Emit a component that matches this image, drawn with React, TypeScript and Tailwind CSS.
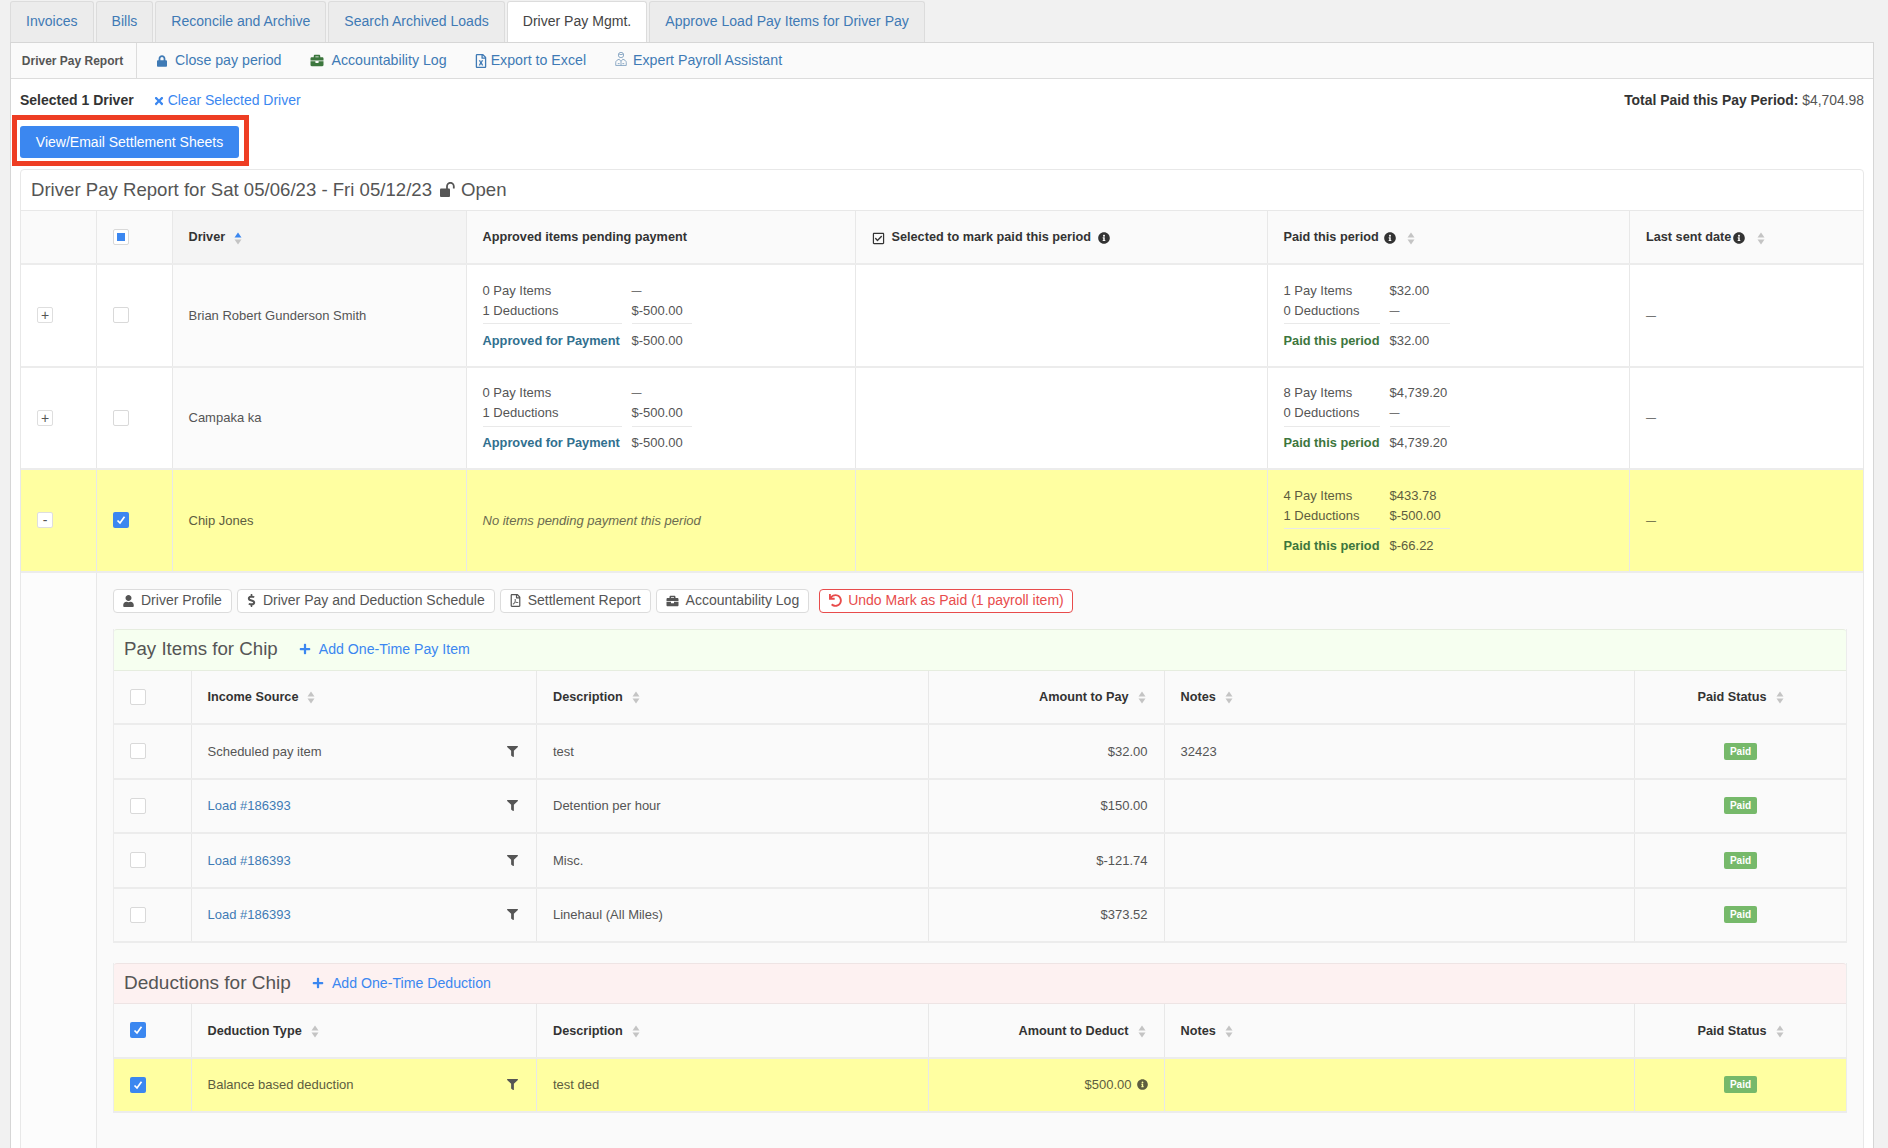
import type { ReactNode } from "react";
import {
  FaLock,
  FaBriefcase,
  FaRegFileExcel,
  FaRegFilePdf,
  FaTimes,
  FaInfoCircle,
  FaRegCheckSquare,
  FaUser,
  FaDollarSign,
  FaUndo,
  FaPlus,
  FaFilter,
} from "react-icons/fa";

const tabs = ["Invoices", "Bills", "Reconcile and Archive", "Search Archived Loads", "Driver Pay Mgmt.", "Approve Load Pay Items for Driver Pay"];

function Sort({ active }: { active?: boolean }) {
  return (
    <svg width="8" height="13" viewBox="0 0 8 13" className="inline-block shrink-0">
      <path d="M4 0.5 L7.5 5.5 L0.5 5.5 Z" fill={active ? "#3b87f0" : "#c4c4c4"} />
      <path d="M4 12.5 L7.5 7.5 L0.5 7.5 Z" fill="#c4c4c4" />
    </svg>
  );
}

function Box({ checked, partial }: { checked?: boolean; partial?: boolean }) {
  if (checked) {
    return (
      <span className="flex h-4 w-4 items-center justify-center rounded-[2px] bg-[#3b87f0]">
        <svg width="10" height="10" viewBox="0 0 10 10">
          <path d="M1.5 5.5 L4 8 L8.5 1.8" fill="none" stroke="#fff" strokeWidth="1.7" />
        </svg>
      </span>
    );
  }
  return (
    <span className="flex h-4 w-4 items-center justify-center rounded-[2px] border border-[#d9d9d9] bg-white">
      {partial && <span className="h-2 w-2 bg-[#3b87f0]" />}
    </span>
  );
}

function Expander({ sign }: { sign: string }) {
  return (
    <span className="flex h-4 w-4 items-center justify-center rounded-[2px] border border-[#dedede] bg-white text-[14px] leading-none text-[#555]">
      {sign}
    </span>
  );
}

function PayrollIcon() {
  return (
    <svg width="12" height="16" viewBox="0 0 13 16" fill="none" stroke="#7a9cbc" strokeWidth="0.9" className="-mt-[3px]">
      <circle cx="6.5" cy="3.7" r="2.9" />
      <path d="M4.2 2.6 C5.5 3.4 7.5 3.4 8.8 2.6" />
      <path d="M0.8 15 V11.6 C0.8 9.8 2.8 8.8 4.6 8.3 L6.5 10.6 L8.4 8.3 C10.2 8.8 12.2 9.8 12.2 11.6 V15 Z" />
      <path d="M6.5 10.6 V15 M3 13 H5 M8 13 H10" />
    </svg>
  );
}

function OpenLock() {
  return (
    <svg width="16" height="15" viewBox="0 0 16 15" className="shrink-0">
      <rect x="0" y="6.5" width="10" height="8.5" rx="1" fill="#555" />
      <path d="M7 7 V4.2 a3.4 3.4 0 0 1 6.8 0 V6.5" fill="none" stroke="#555" strokeWidth="1.8" />
    </svg>
  );
}

function Amount({ value }: { value: string }) {
  return <span className={value === "—" ? "w-[60px] text-[10px]" : "w-[60px]"}>{value}</span>;
}

function Summary({ rows, total, totalClass, labelClass }: { rows: [string, string][]; total: [string, string]; totalClass: string; labelClass: string }) {
  return (
    <div>
      {rows.map(([a, b]) => (
        <div key={a} className="flex h-[20px] items-center gap-[10px]">
          <span className={labelClass}>{a}</span>
          <Amount value={b} />
        </div>
      ))}
      <div className="mt-[3px] flex gap-[10px]">
        <span className={`${labelClass} border-t border-[#e9e9e9]`} />
        <span className="w-[60px] border-t border-[#e9e9e9]" />
      </div>
      <div className="mt-[6px] flex h-[20px] items-center gap-[10px]">
        <span className={`${labelClass} whitespace-nowrap text-[12.8px] font-bold ${totalClass}`}>{total[0]}</span>
        <Amount value={total[1]} />
      </div>
    </div>
  );
}

const drivers = [
  {
    name: "Brian Robert Gunderson Smith",
    pending: [["0 Pay Items", "—"], ["1 Deductions", "$-500.00"]] as [string, string][],
    pendingTotal: "$-500.00",
    paid: [["1 Pay Items", "$32.00"], ["0 Deductions", "—"]] as [string, string][],
    paidTotal: "$32.00",
  },
  {
    name: "Campaka ka",
    pending: [["0 Pay Items", "—"], ["1 Deductions", "$-500.00"]] as [string, string][],
    pendingTotal: "$-500.00",
    paid: [["8 Pay Items", "$4,739.20"], ["0 Deductions", "—"]] as [string, string][],
    paidTotal: "$4,739.20",
  },
  {
    name: "Chip Jones",
    selected: true,
    pending: [] as [string, string][],
    pendingTotal: "",
    paid: [["4 Pay Items", "$433.78"], ["1 Deductions", "$-500.00"]] as [string, string][],
    paidTotal: "$-66.22",
  },
];

const mainCols = "grid grid-cols-[76px_75.5px_294px_389px_412px_362.5px_1fr]";
const subCols = "grid grid-cols-[77.5px_345.5px_391.5px_236px_470.5px_1fr]";
const cell = "flex items-center border-r border-[#e8e8e8] pl-4";

function ActionButton({ icon, children }: { icon: ReactNode; children: ReactNode }) {
  return (
    <button className="flex h-[24px] items-center gap-[7px] rounded-[4px] border border-[#dcdcdc] bg-white px-[9px] text-[14px] text-[#555]">
      {icon}
      {children}
    </button>
  );
}

function SubHeader({ checked, source, amount }: { checked?: boolean; source: string; amount: string }) {
  return (
    <div className={`${subCols} h-[54.5px] border-b-2 border-[#ececec] text-[12.7px] font-bold text-[#333]`}>
      <div className={cell}><Box checked={checked} /></div>
      <div className={`${cell} gap-[9px] pt-[2px]`}>{source}<Sort /></div>
      <div className={`${cell} gap-[9px] pt-[2px]`}>Description<Sort /></div>
      <div className={`${cell} justify-end gap-[9px] pr-[18px] pt-[2px]`}>{amount}<Sort /></div>
      <div className={`${cell} gap-[9px] pt-[2px]`}>Notes<Sort /></div>
      <div className="flex items-center justify-center gap-[9px] pt-[2px]">Paid Status<Sort /></div>
    </div>
  );
}

function SubRow({ source, link, desc, amount, notes, selected, info }: { source: string; link?: boolean; desc: string; amount: string; notes?: string; selected?: boolean; info?: boolean }) {
  return (
    <div className={`${subCols} h-[54.5px] border-b-2 border-[#ececec] ${selected ? "bg-[#ffffa1] text-[#5d5d3f]" : ""}`}>
      <div className={cell}><Box checked={selected} /></div>
      <div className={`${cell} justify-between pr-[18px]`}>
        <span className={link ? "text-[#3f7ab5]" : ""}>{source}</span>
        <FaFilter className="h-[11px] w-[11px] text-[#555]" />
      </div>
      <div className={cell}>{desc}</div>
      <div className={`${cell} justify-end gap-[5px] pr-4`}>
        {amount}
        {info && <FaInfoCircle className="h-[11px] w-[11px]" />}
      </div>
      <div className={cell}>{notes}</div>
      <div className="flex items-center justify-center">
        <span className="flex h-[17px] w-[33px] items-center justify-center rounded-[2px] bg-[#76b96a] text-[10px] font-bold text-white">Paid</span>
      </div>
    </div>
  );
}

export default function App() {
  return (
    <div className="h-[1148px] overflow-hidden bg-[#f1f1f1] pl-[10px] pr-[14px] pt-px font-['Liberation_Sans',Arial,sans-serif] text-[13px] text-[#555]">
      {/* top tabs */}
      <div className="flex h-[41px] gap-[2px]">
        {tabs.map((t) => {
          const active = t === "Driver Pay Mgmt.";
          return (
            <div
              key={t}
              className={`flex items-center rounded-t-[3px] border border-b-0 border-[#dcdcdc] px-[15px] text-[14.05px] ${active ? "bg-white text-[#444]" : "bg-[#ececec] text-[#3f7ab5]"}`}
            >
              {t}
            </div>
          );
        })}
      </div>

      <div className="h-full border border-[#d6d6d6] bg-white">
        {/* sub nav */}
        <div className="flex h-[36px] items-center border-b border-[#dcdcdc] bg-[#fafafa] text-[14.2px] text-[#3f7ab5]">
          <div className="flex h-full w-[126px] items-center justify-center border-r border-[#dcdcdc] pr-[2px] text-[12px] font-bold text-[#555]">Driver Pay Report</div>
          <a className="ml-[20px] flex items-center gap-[8px] pt-px"><FaLock className="h-[12px] w-[10px]" />Close pay period</a>
          <a className="ml-[29px] flex items-center gap-[7px] pt-px"><FaBriefcase className="h-[13px] w-[14px] text-[#3c763d]" />Accountability Log</a>
          <a className="ml-[28px] flex items-center gap-[4px] pt-px"><FaRegFileExcel className="h-[14px] w-[12px]" />Export to Excel</a>
          <a className="ml-[29px] flex items-center gap-[6px] pt-px"><PayrollIcon />Expert Payroll Assistant</a>
        </div>

        <div className="px-[9px]">
          {/* selection summary */}
          <div className="flex h-[36px] items-center justify-between pt-[7px]">
            <div className="flex items-center text-[14px]">
              <span className="font-bold text-[#333]">Selected 1 Driver</span>
              <a className="ml-[19px] flex items-center gap-[3px] text-[#3b87f0]"><FaTimes className="h-[12px] w-[12px]" />Clear Selected Driver</a>
            </div>
            <div className="text-[13.9px]"><span className="font-bold text-[#333]">Total Paid this Pay Period:</span> $4,704.98</div>
          </div>

          {/* highlighted action */}
          <div className="-ml-2 w-[237px] border-[5px] border-[#ee3d23] bg-white pb-[3px] pl-[3px] pt-[6px]">
            <button className="flex h-[32px] w-[219px] items-center justify-center rounded-[3px] bg-[#3b87f0] text-[14px] text-white">View/Email Settlement Sheets</button>
          </div>

          {/* report card */}
          <div className="mt-[3px] h-[1000px] rounded-t-[4px] border border-[#e8e8e8] bg-white">
            <div className="flex h-[41px] items-center gap-[8px] border-b border-[#e8e8e8] pl-[10px] text-[18.6px] text-[#555]">
              Driver Pay Report for Sat 05/06/23 - Fri 05/12/23
              <span className="flex items-center gap-[5px]"><OpenLock />Open</span>
            </div>

            <div className={`${mainCols} h-[54px] border-b-2 border-[#ececec] bg-[#fafafa] text-[12.7px] font-bold text-[#333]`}>
              <div className={cell} />
              <div className={cell}><Box partial /></div>
              <div className={`${cell} gap-[9px] bg-[#f4f4f4] pt-[2px]`}>Driver<Sort active /></div>
              <div className={`${cell} pt-[2px]`}>Approved items pending payment</div>
              <div className={`${cell} gap-[7px] pt-[2px]`}><FaRegCheckSquare className="h-[13px] w-[13px]" />Selected to mark paid this period<FaInfoCircle className="h-[12px] w-[12px]" /></div>
              <div className={`${cell} gap-[5px] pt-[2px]`}>Paid this period<FaInfoCircle className="h-[12px] w-[12px]" /><span className="ml-[6px] flex"><Sort /></span></div>
              <div className="flex items-center gap-[2px] pl-4 pt-[2px]">Last sent date<FaInfoCircle className="h-[12px] w-[12px]" /><span className="ml-[10px] flex"><Sort /></span></div>
            </div>

            {drivers.map((d) => (
              <div key={d.name} className={`${mainCols} h-[102.5px] border-b-2 border-[#ececec] ${d.selected ? "bg-[#ffffa1] text-[#5d5d3f]" : ""}`}>
                <div className={cell}><Expander sign={d.selected ? "-" : "+"} /></div>
                <div className={cell}><Box checked={d.selected} /></div>
                <div className={`${cell} ${d.selected ? "" : "bg-[#fbfbfb]"}`}>{d.name}</div>
                <div className={cell}>
                  {d.pending.length > 0 ? (
                    <Summary rows={d.pending} total={["Approved for Payment", d.pendingTotal]} totalClass="text-[#31708f]" labelClass="w-[139px]" />
                  ) : (
                    <span className="italic text-[#6b6b50]">No items pending payment this period</span>
                  )}
                </div>
                <div className={cell} />
                <div className={cell}>
                  <Summary rows={d.paid} total={["Paid this period", d.paidTotal]} totalClass="text-[#3c763d]" labelClass="w-[96px]" />
                </div>
                <div className="flex items-center pl-4 text-[10px]">—</div>
              </div>
            ))}

            {/* expanded driver */}
            <div className="flex h-full">
              <div className="w-[76px] shrink-0 border-r border-[#e8e8e8] bg-[#fcfcfc]" />
              <div className="min-w-0 flex-1 bg-[#fafafa] pl-[16px] pr-[16px] pt-[16px]">
                <div className="flex gap-[5px]">
                  <ActionButton icon={<FaUser className="h-[12px] w-[11px]" />}>Driver Profile</ActionButton>
                  <ActionButton icon={<FaDollarSign className="h-[13px] w-[9px]" />}>Driver Pay and Deduction Schedule</ActionButton>
                  <ActionButton icon={<FaRegFilePdf className="h-[13px] w-[11px]" />}>Settlement Report</ActionButton>
                  <ActionButton icon={<FaBriefcase className="h-[12px] w-[13px]" />}>Accountability Log</ActionButton>
                  <button className="ml-[5px] flex h-[24px] items-center gap-[6px] rounded-[4px] border border-[#e84c4c] bg-white pl-[9px] pr-[8px] text-[14px] text-[#e84c4c]">
                    <FaUndo className="h-[13px] w-[13px]" />Undo Mark as Paid (1 payroll item)
                  </button>
                </div>

                <div className="mt-[16px] border-x border-[#ececec]">
                  <div className="flex h-[42px] items-center gap-[21px] rounded-t-[3px] border-y border-[#e6eddf] bg-[#f6fff0] pl-[10px]">
                    <span className="text-[18.7px] text-[#555]">Pay Items for Chip</span>
                    <a className="flex items-center gap-[8px] text-[14.15px] text-[#3b87f0]"><FaPlus className="h-[12px] w-[12px]" />Add One-Time Pay Item</a>
                  </div>
                  <SubHeader source="Income Source" amount="Amount to Pay" />
                  <SubRow source="Scheduled pay item" desc="test" amount="$32.00" notes="32423" />
                  <SubRow source="Load #186393" link desc="Detention per hour" amount="$150.00" />
                  <SubRow source="Load #186393" link desc="Misc." amount="$-121.74" />
                  <SubRow source="Load #186393" link desc="Linehaul (All Miles)" amount="$373.52" />
                </div>

                <div className="mt-[20px] border-x border-[#ececec]">
                  <div className="flex h-[41px] items-center gap-[21px] rounded-t-[3px] border-y border-[#eee4e4] bg-[#fdf1f1] pl-[10px]">
                    <span className="text-[19px] text-[#555]">Deductions for Chip</span>
                    <a className="flex items-center gap-[8px] text-[14.15px] text-[#3b87f0]"><FaPlus className="h-[12px] w-[12px]" />Add One-Time Deduction</a>
                  </div>
                  <SubHeader checked source="Deduction Type" amount="Amount to Deduct" />
                  <SubRow source="Balance based deduction" desc="test ded" amount="$500.00" selected info />
                </div>
              </div>
            </div>
          </div>
        </div>
      </div>
    </div>
  );
}
